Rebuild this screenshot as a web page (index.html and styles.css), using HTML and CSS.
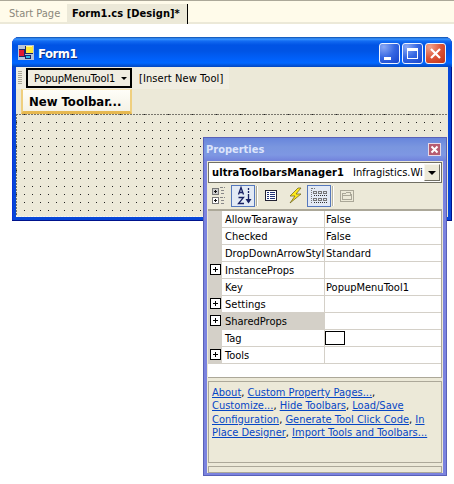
FILE: index.html
```html
<!DOCTYPE html>
<html lang="en">
<head>
<meta charset="utf-8">
<title>Form1.cs [Design]</title>
<link rel="stylesheet" href="styles.css">
</head>
<body>
<nav class="tabs"><div class="tab"><span class="t-start">Start Page</span></div><div class="tab active"><span class="t-active">Form1.cs [Design]*</span></div></nav>
<main class="desktop">
<section class="form">
  <header class="titlebar">
    <svg class="app" width="16" height="16" shape-rendering="crispEdges"><path fill="#b8c4d8" d="M0 0h16v15H0z"/><path fill="#182868" d="M1 4h6v8H1zM7 1h8v8H7zM7 10h6v4H7z"/><path fill="#e01830" d="M1 5h5v6H1z"/><path fill="#ffe838" d="M8 1h7v7H8z"/><path fill="#fffb9c" d="M8 1h6v1H8z"/><path fill="#28b8e8" d="M8 11h4v2H8z"/></svg>
    <h1>Form1</h1>
    <div class="controls">
      <span class="ctl"><svg width="19" height="19"><path d="M4 13h7v3H4z" fill="#fff"/></svg></span>
      <span class="ctl"><svg width="19" height="19"><path d="M4 4h11v11H4zM5 7v7h9V7z" fill="#fff" fill-rule="evenodd"/></svg></span>
      <span class="ctl close"><svg width="19" height="19"><path d="M5 5l9 9M14 5l-9 9" stroke="#fff" stroke-width="2.2"/></svg></span>
    </div>
  </header>
  <div class="toolbar"><i class="grip"></i><button class="popup"><span class="t-popup">PopupMenuTool1</span><i class="down"></i></button><span class="t-insert">[Insert New Tool]</span></div>
  <div class="newrow"><button class="newbar"><span class="t-new">New Toolbar...</span></button></div>
  <svg class="surface" width="432" height="103" shape-rendering="crispEdges"><defs><pattern id="dots" width="8" height="8" patternUnits="userSpaceOnUse"><path d="M0 0h1v1H0z" fill="#222"/></pattern></defs><path fill="#ece9d8" d="M0 0h432v103H0z"/><path fill="url(#dots)" d="M0 0h432v103H0z"/><path d="M0 .5h432M.5 0v103" stroke="#77756c" stroke-dasharray="2 1" fill="none"/><path d="M0 102.5h432" stroke="#f4f4ee" stroke-dasharray="2 1"/></svg>
</section>

<aside class="props">
  <header class="ptitle"><h2 class="t-prop">Properties</h2><span class="pclose"><svg width="11" height="11"><path d="M2.5 2.5l6 6M8.500 2.500l-6 6" stroke="#fff" stroke-width="2"/></svg></span></header>
  <div class="pbody">
    <div class="combo"><b class="t-obj">ultraToolbarsManager1</b><span class="t-type">Infragistics.Wi</span><span class="drop"><i></i></span></div>
    <svg class="tools" width="235" height="26" shape-rendering="crispEdges">
      <g fill="none" stroke="#777"><path fill="#ccc" d="M4.500 5.500h6v6h-6z"/><path fill="#fff" d="M4.500 14.500h6v6h-6z"/><path stroke="#111" d="M6 8.500h3M7.500 7v3M6 17.500h3M7.500 16v3"/><path stroke="#888" d="M12 4.500h5M13 7.500h4M13 10.500h4M12 14.500h5M13 17.500h4M13 20.500h4" stroke-dasharray="3 1"/></g>
      <path fill="#e3eaf5" stroke="#5578bd" d="M23.500 2.500h23v21h-23z"/>
      <g fill="none" stroke="#172064" stroke-width="1.300" shape-rendering="auto"><path d="M30.500 11.500l2.500-7 2.500 7M31.500 9.500h3M30.500 14.500h5l-5 6h5.500"/><path d="M40.500 5v2M40.500 8v2M40.500 11v8"/><path fill="#172064" stroke="none" d="M37.500 16h6l-3 4.500z"/></g>
      <path d="M48.500 3v20" stroke="#aaa898"/><path d="M49.500 3v20" stroke="#fff"/>
      <path fill="#fff" stroke="#223" d="M57.500 7.500h11v10h-11z"/><path stroke="#223378" d="M59 9.500h2M62 9.500h5M59 11.500h2M62 11.500h5M59 13.500h2M62 13.500h5M59 15.500h2M62 15.500h5"/>
      <g shape-rendering="auto"><path fill="#ffe91b" stroke="#746b22" stroke-width=".8" d="M90 5l-8 8h5l-5 7 11-9h-5l5-6z"/></g>
      <path fill="#e3eaf5" stroke="#5578bd" d="M99.500 2.500h23v21h-23z"/>
      <g fill="none" stroke="#777"><path stroke-dasharray="1 1" d="M103.500 5v16M104 5.500h3"/><path d="M105.500 8.500h3v2h-3zM110.500 8.500h3v2h-3zM115.500 8.500h3v2h-3zM105.500 15.500h3v2h-3zM110.500 15.500h3v2h-3zM115.500 15.500h3v2h-3z"/><path stroke="#333" stroke-dasharray="1 1" d="M106 12.500h14M106 19.500h14"/></g>
      <path d="M124.500 3v20" stroke="#b5b3a5"/><path d="M125.500 3v20" stroke="#fff"/>
      <g fill="none" stroke="#aaa798"><path d="M132.500 7.500h13v11h-13zM134.500 10.500h3l1-1h4v2h1v5h-9zM135 12.500h8"/></g>
    </svg>
    <div class="grid">
      <div class="row"><i></i><span>AllowTearaway</span><span>False</span></div>
      <div class="row"><i></i><span>Checked</span><span>False</span></div>
      <div class="row"><i></i><span>DropDownArrowStyl</span><span>Standard</span></div>
      <div class="row"><i class="plus"></i><span>InstanceProps</span><span></span></div>
      <div class="row"><i></i><span>Key</span><span>PopupMenuTool1</span></div>
      <div class="row"><i class="plus"></i><span>Settings</span><span></span></div>
      <div class="row selected"><i class="plus"></i><span>SharedProps</span><span></span></div>
      <div class="row"><i></i><span>Tag</span><span class="swatchcell"><b class="swatch"></b></span></div>
      <div class="row"><i class="plus"></i><span>Tools</span><span></span></div>
    </div>
    <div class="links">
      <div><a>About</a>, <a>Custom Property Pages...</a>,</div>
      <div><a>Customize...</a>, <a>Hide Toolbars</a>, <a>Load/Save</a></div>
      <div><a>Configuration</a>, <a>Generate Tool Click Code</a>, <a>In</a></div>
      <div><a>Place Designer</a>, <a>Import Tools and Toolbars...</a></div>
    </div>
    <div class="foot"></div>
  </div>
</aside>
</main>
</body>
</html>
```
FILE: styles.css
```css
* { box-sizing: border-box; }
body { margin: 0; width: 454px; height: 484px; overflow: hidden; background: #fff; color: #000; font: 11px/13px "DejaVu Sans Condensed", "DejaVu Sans", sans-serif; font-stretch: condensed; white-space: nowrap; }
h1, h2 { margin: 0; }
button { border: 0; padding: 0; font: inherit; color: inherit; }
.tabs { display: flex; height: 24px; padding-top: 3px; background: #fffbea; border-top: 1px solid #aca899; border-bottom: 2px solid #ece9d8; }
.tab { width: 67px; padding: 3px 0 0 9px; color: #8b887c; }
.tab.active { width: 121px; height: 20px; padding-left: 5px; background: #ece9d8; color: #000; font-weight: bold; border-right: 1px solid #000; }
.t-active { letter-spacing: .06px; }
.desktop { position: relative; }
.form { position: absolute; left: 12px; top: 13px; width: 440px; height: 184px; padding: 0 4px 4px; border-radius: 7px 7px 0 0; background: #0646d8; box-shadow: inset 0 -1px #00138c, inset -1px 0 #00138c, inset 1px 0 #0831d9; }
.titlebar { display: flex; align-items: center; height: 30px; margin: 0 -4px; padding: 2px 6px 0 6px; border-radius: 7px 7px 0 0; background: linear-gradient(#0b4dad 0, #3995ff 2px, #136cf3 4px, #0053e5 8px, #0054e5 14px, #0060fa 22px, #0067ff 26px, #0346be 30px); color: #fff; }
.titlebar h1 { margin: 2px 0 0 4px; font: bold 13px/18px "DejaVu Sans Condensed", "DejaVu Sans", sans-serif; font-stretch: condensed; text-shadow: 1px 1px #0c2e85; letter-spacing: -.5px; }
.controls { display: flex; gap: 2px; margin-left: auto; }
.ctl { width: 21px; height: 21px; border: 1px solid #eef4ff; border-radius: 3px; background: radial-gradient(circle at 20% 15%, #8ba9f5, #3566e2 50%, #1744cb); }
.ctl svg, .pclose svg { display: block; }
.ctl.close { background: radial-gradient(circle at 20% 15%, #f1a28c, #dd5438 50%, #bf3215); }
.toolbar { display: flex; align-items: center; height: 22px; background: linear-gradient(90deg, #f0ede1 0 213px, #ece9d8 213px); }
.grip { width: 4px; height: 14px; margin: 0 4px 0 2px; background: repeating-linear-gradient(#aaa798 0 1px, transparent 1px 2px); }
.popup { display: flex; align-items: center; width: 106px; height: 20px; padding-left: 6px; border: 2px solid #000; background: #f0ede1; }
.t-popup { letter-spacing: -.12px; }
.down { margin-left: auto; margin-right: 3px; border: 3px solid transparent; border-top-color: #000; border-bottom: 0; }
.t-insert { margin-left: 7px; padding-top: 1px; letter-spacing: .08px; }
.newrow { height: 25px; padding: 0 0 0 5px; background: #ece9d8; }
.newbar { display: flex; align-items: center; width: 111px; height: 25px; padding: 1px 0 0 6px; border: solid #edc96e; border-width: 1px 2px 3px; border-color: #f7e5b5 #efcf7e #e6b850 #efcf7e; background: linear-gradient(#fffef8, #f4f2e7); font-size: 13px; font-weight: bold; }
.surface { display: block; }
.props { position: absolute; left: 203px; top: 113px; width: 244px; height: 339px; padding: 0 4px 4px; border: 1px solid #5961b7; background: #7b83df; }
.ptitle { display: flex; justify-content: space-between; align-items: center; height: 23px; margin: 0 -4px; padding: 1px 5px 0 2px; background: linear-gradient(#6886dc, #7a96df 9px, #7e97e3 17px, #7181db); color: #dce4fb; }
.ptitle h2 { font: bold 11px/14px "DejaVu Sans Condensed", "DejaVu Sans", sans-serif; font-stretch: condensed; }
.pclose { width: 13px; height: 13px; margin-bottom: 2px; border: 1px solid #e7d9e8; background: #b65b70; }
.pbody { width: 236px; height: 312px; margin-left: -1px; padding: 1px 1px 0; background: #ece9d8; }
.combo { display: flex; align-items: center; height: 21px; padding: 1px 1px 1px 3px; border: 1px solid #716f64; background: #fff; }
.t-obj { letter-spacing: .13px; }
.t-type { margin-left: 9px; }
.drop { display: grid; place-items: center; width: 16px; height: 17px; margin-left: auto; border: 1px solid; border-color: #f7f5ee #716f64 #716f64 #f7f5ee; background: #ece9d8; flex: none; }
.drop i { border: 4px solid transparent; border-top-color: #000; border-bottom: 0; }
.tools { display: block; }
.grid { height: 169px; border: 1px solid #aca899; border-top-width: 2px; border-left: 0; background: #fff; }
.row { display: grid; grid-template-columns: 14px 102px 1fr; height: 17px; }
.row > i { background: #d4d0c8; }
.row > span { padding: 2px 0 0 3px; border-bottom: 1px solid #d4d0c8; }
.row > span + span { border-left: 1px solid #d4d0c8; padding-left: 1px; }
.selected > i + span { background: #d4d0c8; }
.plus::before { content: ""; display: block; width: 9px; height: 9px; margin: 2px 0 0 2px; border: 1px solid #000; background: linear-gradient(#000, #000) center / 5px 1px no-repeat, linear-gradient(#000, #000) center / 1px 5px no-repeat, #fff; }
.row > .swatchcell { padding: 1px 0 0 0; }
.swatch { display: block; width: 20px; height: 14px; border: 1px solid #000; }
.links { height: 82px; margin-top: 3px; padding: 4px 0 0 3px; border: 1px solid #aca899; line-height: 13.4px; }
.links a { color: #0646c5; text-decoration: underline; text-underline-offset: 1px; }
.foot { height: 7px; margin-top: 3px; border: 1px solid #aca899; }
```
